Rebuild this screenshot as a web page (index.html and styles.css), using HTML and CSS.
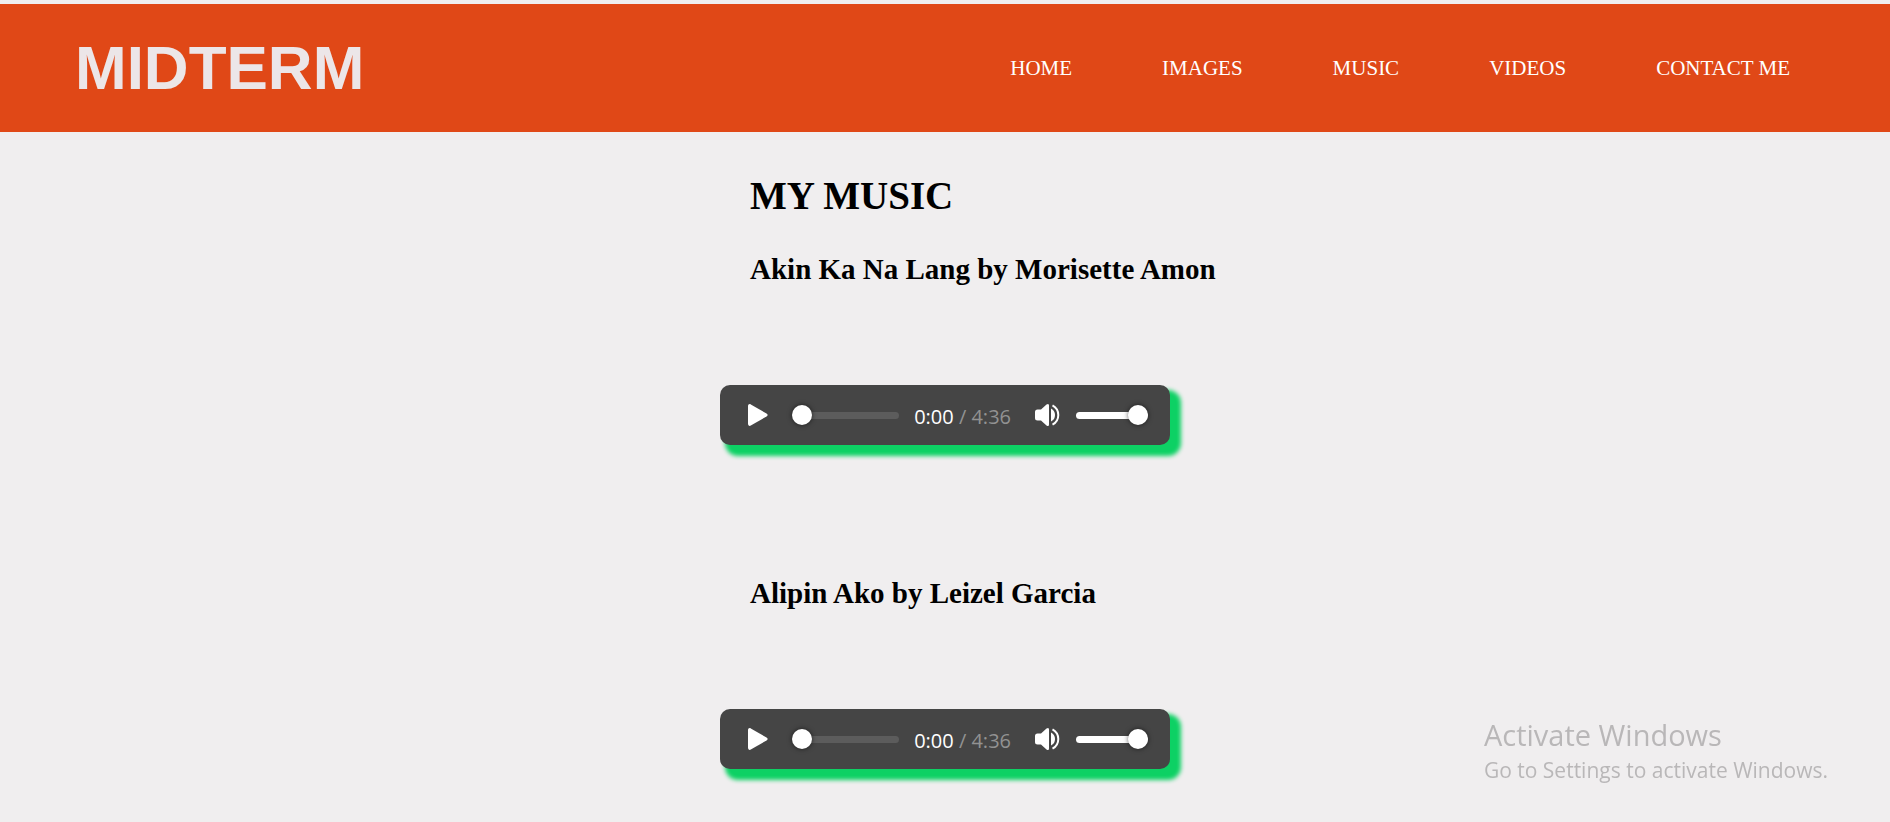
FILE: index.html
```html
<!DOCTYPE html>
<html lang="en">
<head>
<meta charset="utf-8">
<title>My Music</title>
<link rel="stylesheet" href="styles.css">
</head>
<body>
<header class="header">
  <div class="logo">MIDTERM</div>
  <nav class="nav">
    <a href="#home">HOME</a>
    <a href="#images">IMAGES</a>
    <a href="#music">MUSIC</a>
    <a href="#videos">VIDEOS</a>
    <a href="#contact">CONTACT ME</a>
  </nav>
</header>
<main class="music">
  <h1 class="title">MY MUSIC</h1>
  <section class="song">
    <h2 class="song-title">Akin Ka Na Lang by Morisette Amon</h2>
    <div class="player">
      <button class="icon-button play" type="button" aria-label="Play">
        <svg width="20" height="22" viewBox="0 0 20 22"><path d="M0 2.2C0 .5 1.3-.4 2.8.4L18.5 9.5C20 10.4 20 11.6 18.5 12.5L2.8 21.6C1.3 22.4 0 21.5 0 19.8Z" fill="#fff"/></svg>
      </button>
      <input class="slider seek" type="range" min="0" max="276" value="0" aria-label="Seek">
      <span class="time">0:00 <span class="duration">/ 4:36</span></span>
      <button class="icon-button mute" type="button" aria-label="Mute">
        <svg width="26" height="22" viewBox="0 0 26 22"><path d="M2.5 5.500H6L11.500.6Q14 -.8 14 1.600V20.400Q14 22.800 11.500 21.400L6 16.500H2.500Q0 16.500 0 14V8Q0 5.500 2.500 5.500Z" fill="#fff"/><path d="M16 4.500Q20 6.500 20 11T16 17.500Z" fill="#fff"/><path d="M17.500 1.300Q23.300 4.500 23.300 11T17.500 20.700" fill="none" stroke="#fff" stroke-width="2"/></svg>
      </button>
      <input class="slider volume" type="range" min="0" max="100" value="100" aria-label="Volume">
    </div>
  </section>
  <section class="song">
    <h2 class="song-title">Alipin Ako by Leizel Garcia</h2>
    <div class="player">
      <button class="icon-button play" type="button" aria-label="Play">
        <svg width="20" height="22" viewBox="0 0 20 22"><path d="M0 2.2C0 .5 1.3-.4 2.8.4L18.5 9.5C20 10.4 20 11.6 18.5 12.5L2.8 21.6C1.3 22.4 0 21.5 0 19.8Z" fill="#fff"/></svg>
      </button>
      <input class="slider seek" type="range" min="0" max="276" value="0" aria-label="Seek">
      <span class="time">0:00 <span class="duration">/ 4:36</span></span>
      <button class="icon-button mute" type="button" aria-label="Mute">
        <svg width="26" height="22" viewBox="0 0 26 22"><path d="M2.5 5.500H6L11.500.6Q14 -.8 14 1.600V20.400Q14 22.800 11.500 21.400L6 16.500H2.500Q0 16.500 0 14V8Q0 5.500 2.500 5.500Z" fill="#fff"/><path d="M16 4.500Q20 6.500 20 11T16 17.500Z" fill="#fff"/><path d="M17.500 1.300Q23.300 4.500 23.300 11T17.500 20.700" fill="none" stroke="#fff" stroke-width="2"/></svg>
      </button>
      <input class="slider volume" type="range" min="0" max="100" value="100" aria-label="Volume">
    </div>
  </section>
</main>
<aside class="watermark">
  <p class="watermark-title">Activate Windows</p>
  <p class="watermark-text">Go to Settings to activate Windows.</p>
</aside>
</body>
</html>
```
FILE: styles.css
```css
* {
  box-sizing: border-box;
}

body {
  margin: 0;
  padding-top: 4px;
  background: #f0eeef;
  color: #000;
  font-family: "Liberation Serif", "Times New Roman", serif;
}

.header {
  display: flex;
  align-items: center;
  justify-content: space-between;
  padding: 28px 100px 28px 75px;
  background: #e04817;
}

.logo {
  color: #ece6e8;
  font: bold 62px/72px "Liberation Sans", Arial, sans-serif;
}

.nav {
  display: flex;
  gap: 90px;
}

.nav a {
  color: #fff;
  font-size: 21px;
  line-height: 24px;
  text-decoration: none;
}

.music {
  width: 450px;
  margin: 0 auto;
  padding: 40px 0;
}

.title,
.song-title {
  margin: 0;
  padding-left: 30px;
  white-space: nowrap;
}

.title {
  margin-bottom: 32px;
  font-size: 39px;
  line-height: 48px;
}

.song {
  margin-bottom: 131px;
}

.song:last-child {
  margin-bottom: 0;
}

.song-title {
  margin-bottom: 99px;
  font-size: 29px;
  line-height: 34px;
}

.player {
  display: flex;
  align-items: center;
  height: 60px;
  padding: 0 22px 0 28px;
  border-radius: 10px;
  background: #454545;
  box-shadow: 8px 8px 4px 3px #0dd164;
}

.icon-button {
  display: flex;
  padding: 0;
  border: 0;
  background: none;
}

.play {
  margin-right: 24px;
}

.mute {
  margin-right: 15px;
}

.slider {
  appearance: none;
  height: 20px;
  margin: 0;
  background: none;
}

.seek {
  flex: 1;
  min-width: 0;
  margin-right: 15px;
}

.volume {
  width: 72px;
}

.slider::-webkit-slider-runnable-track {
  height: 7px;
  border-radius: 4px;
  background: #5c5c5c;
}

.volume::-webkit-slider-runnable-track {
  background: #fff;
}

.slider::-webkit-slider-thumb {
  appearance: none;
  width: 20px;
  height: 20px;
  margin-top: -7px;
  border-radius: 50%;
  background: #fff;
  box-shadow: 0 0 5px rgba(0, 0, 0, 0.6);
}

.time {
  margin-right: 24px;
  padding-top: 3px;
  color: #fff;
  font: 20px/24px "Open Sans", "Noto Sans", sans-serif;
  white-space: nowrap;
}

.duration {
  color: #929292;
}

.watermark {
  position: fixed;
  right: 62px;
  bottom: 36px;
  color: #b9b7b8;
  font-family: "Open Sans", "Noto Sans", sans-serif;
}

.watermark p {
  margin: 0;
}

.watermark .watermark-title {
  font-size: 29px;
  line-height: 38px;
}

.watermark .watermark-text {
  font-size: 21px;
  line-height: 32px;
}
```
